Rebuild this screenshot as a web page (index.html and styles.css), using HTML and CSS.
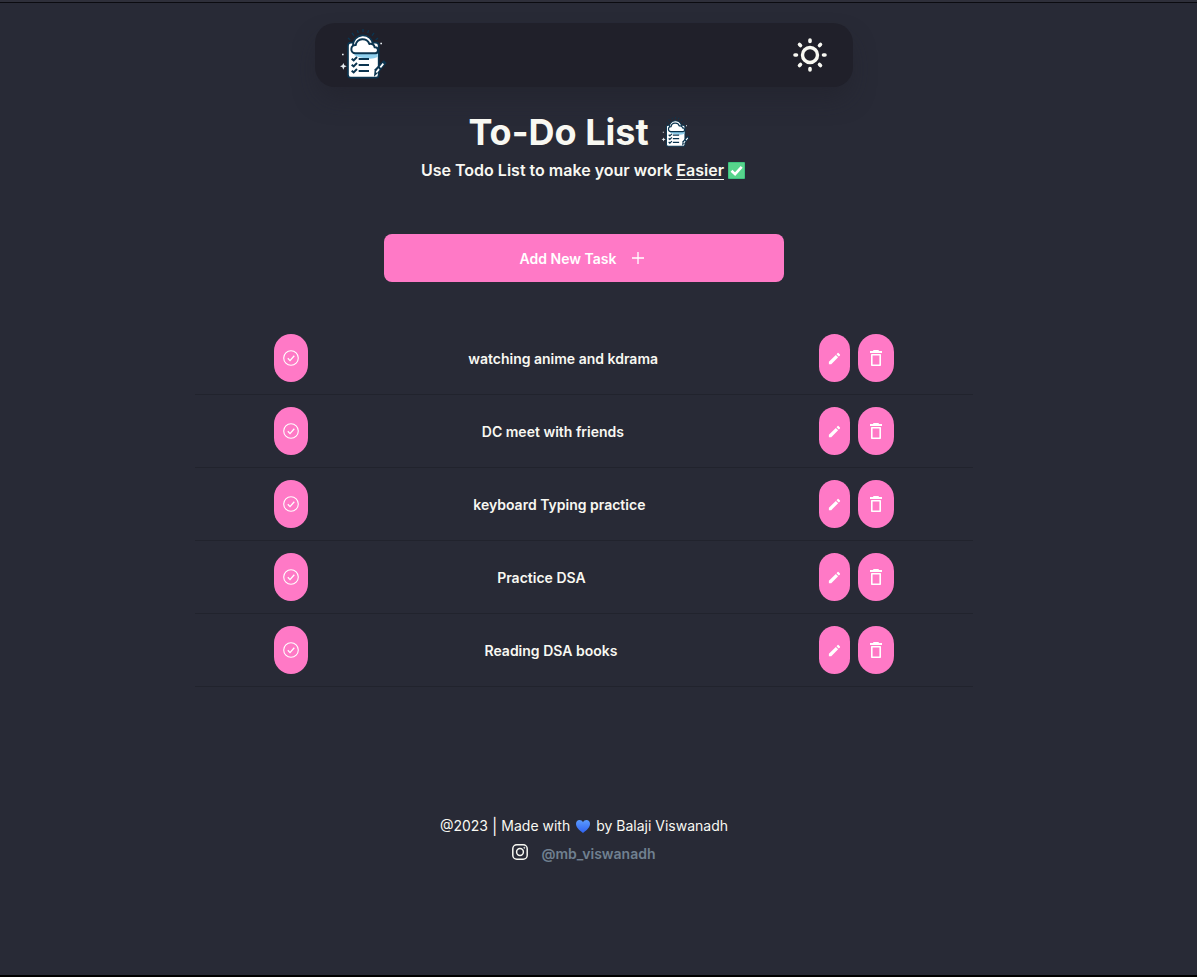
FILE: index.html
```html
<!DOCTYPE html>
<html lang="en">
<head>
<meta charset="utf-8">
<meta name="viewport" content="width=device-width, initial-scale=1">
<title>To-Do List</title>
<link rel="stylesheet" href="styles.css">
</head>
<body>
<svg class="sprite" aria-hidden="true">
  <symbol id="logo" viewBox="12 0 144 156">
    <path d="M39 30l7 6M51 15l6 8M67 7l3 8M84 3v9M101 7l-3 8M117 15l-6 8M129 30l-7 6" fill="none" stroke="#0b3550" stroke-width="4"/>
    <rect x="39" y="44" width="92" height="105" rx="9" fill="#fff" stroke="#0b3550" stroke-width="5"/>
    <path d="M58 76h70v11q-15 7-32 4-22 0-38-9z" fill="#8fd0ee"/>
    <path d="M54 54A30 30 0 0 1 114 50V62H54Z" fill="#fff" stroke="#0b3550" stroke-width="5"/>
    <path d="M61 76a12 12 0 0 1 1-25 21 20 0 0 1 41-3 12 12 0 0 1 16 10 9 9 0 0 1 2 18z" fill="#fff" stroke="#0b3550" stroke-width="6" stroke-linejoin="round"/>
    <path d="M71 93h31M71 111h31M71 129h31" stroke="#0b3550" stroke-width="6"/>
    <path d="M50 92l6 5 10-10M50 110l6 5 10-10M50 128l6 5 10-10" fill="none" stroke="#0b3550" stroke-width="6"/>
    <path d="M117 146l2-22 27-27 9 8-24 28z" fill="#0b3550"/>
    <path d="M122 132l8-11 4 4-8 10zM134 116l9-11 4 4-9 11z" fill="#fff"/>
    <path d="M25 105l3 7 7 3-7 3-3 7-3-7-7-3 7-3zM21 77h5v5h-5zM136 44h5v5h-5z" fill="#e8eef2"/>
  </symbol>
  <symbol id="check" viewBox="0 0 16 16">
    <circle cx="8" cy="8" r="7.3" fill="none" stroke="currentColor" stroke-width="1.1"/>
    <path d="M4.800 8.300l2.200 2.300 4.300-4.900" fill="none" stroke="currentColor" stroke-width="1.3"/>
  </symbol>
  <symbol id="pencil" viewBox="0 0 24 24">
    <path fill="currentColor" d="M3 17.200V21h3.800L17.800 9.900l-3.700-3.700zM20.700 7a1 1 0 0 0 0-1.400l-2.300-2.300a1 1 0 0 0-1.400 0l-1.800 1.800 3.700 3.700z"/>
  </symbol>
  <symbol id="trash" viewBox="0 0 12 16">
    <path d="M3.500 0h5l.5 1h3v2H0V1h3z" fill="currentColor"/>
    <path d="M1.800 4.800h8.400v10.400H1.800z" fill="none" stroke="currentColor" stroke-width="1.6" stroke-linejoin="round"/>
  </symbol>
</svg>
<div class="page">
  <header class="navbar">
    <a href="#" aria-label="Home"><svg class="navbar-logo"><use href="#logo"/></svg></a>
    <button class="theme" type="button" aria-label="Switch theme">
      <svg viewBox="0 0 34 34" fill="none" stroke="currentColor" stroke-linecap="round">
        <circle cx="17" cy="17" r="7.500" stroke-width="3.400"/>
        <path stroke-width="3.600" d="M17 2v1.500M17 30.500V32M2 17h1.500M30.500 17H32M6.500 6.500l1 1M26.500 26.500l1 1M27.500 6.500l-1 1M7.500 26.500l-1 1"/>
      </svg>
    </button>
  </header>
  <main class="main">
    <h1 class="title">To-Do List <svg class="title-logo" aria-hidden="true"><use href="#logo"/></svg></h1>
    <p class="subtitle">Use Todo List to make your work <span class="easier">Easier</span>
      <svg class="tick" viewBox="0 0 17 17" aria-hidden="true"><rect width="17" height="17" rx="1" fill="#3fc380"/><rect x="1" y="1" width="15" height="15" fill="#57d48c"/><path d="M3.500 8.700l3.600 3.500 6.600-7.400" fill="none" stroke="#fff" stroke-width="2.600"/></svg>
    </p>
    <button class="add" type="button"><span>Add New Task</span>
      <svg viewBox="0 0 12 12" aria-hidden="true"><path d="M6 0v12M0 6h12" stroke="currentColor" stroke-width="1.3"/></svg>
    </button>
    <ul class="tasks">
      <li class="task">
        <button class="pill done" type="button" aria-label="Complete"><svg><use href="#check"/></svg></button>
        <div class="task-name"><span>watching anime and kdrama</span></div>
        <button class="pill edit" type="button" aria-label="Edit"><svg><use href="#pencil"/></svg></button>
        <button class="pill delete" type="button" aria-label="Delete"><svg><use href="#trash"/></svg></button>
      </li>
      <li class="task">
        <button class="pill done" type="button" aria-label="Complete"><svg><use href="#check"/></svg></button>
        <div class="task-name"><span>DC meet with friends</span></div>
        <button class="pill edit" type="button" aria-label="Edit"><svg><use href="#pencil"/></svg></button>
        <button class="pill delete" type="button" aria-label="Delete"><svg><use href="#trash"/></svg></button>
      </li>
      <li class="task">
        <button class="pill done" type="button" aria-label="Complete"><svg><use href="#check"/></svg></button>
        <div class="task-name"><span>keyboard Typing practice</span></div>
        <button class="pill edit" type="button" aria-label="Edit"><svg><use href="#pencil"/></svg></button>
        <button class="pill delete" type="button" aria-label="Delete"><svg><use href="#trash"/></svg></button>
      </li>
      <li class="task">
        <button class="pill done" type="button" aria-label="Complete"><svg><use href="#check"/></svg></button>
        <div class="task-name"><span>Practice DSA</span></div>
        <button class="pill edit" type="button" aria-label="Edit"><svg><use href="#pencil"/></svg></button>
        <button class="pill delete" type="button" aria-label="Delete"><svg><use href="#trash"/></svg></button>
      </li>
      <li class="task">
        <button class="pill done" type="button" aria-label="Complete"><svg><use href="#check"/></svg></button>
        <div class="task-name"><span>Reading DSA books</span></div>
        <button class="pill edit" type="button" aria-label="Edit"><svg><use href="#pencil"/></svg></button>
        <button class="pill delete" type="button" aria-label="Delete"><svg><use href="#trash"/></svg></button>
      </li>
    </ul>
  </main>
  <footer class="footer">
    <p class="credit">@2023 <span class="bar">|</span> Made with
      <svg class="heart" viewBox="0 0 16 14" role="img" aria-label="love"><defs><linearGradient id="blue" x2="0" y2="1"><stop stop-color="#5b9bff"/><stop offset="1" stop-color="#2f62f0"/></linearGradient></defs><path fill="url(#blue)" d="M8 14C4 11 1 8.500 1 4.800 1 2.300 2.500 1 4.500 1 6 1 7.300 1.800 8 3.200 8.700 1.800 10 1 11.500 1c2 0 3.500 1.300 3.500 3.800C15 8.500 12 11 8 14z"/></svg>
      by Balaji Viswanadh</p>
    <p class="social">
      <svg class="instagram" viewBox="0 0 16 16" fill="none" stroke="currentColor" stroke-width="1.5" aria-hidden="true"><rect x=".8" y=".8" width="14.400" height="14.400" rx="4"/><circle cx="8" cy="8" r="3.400"/><circle cx="12.300" cy="3.800" r=".5" stroke-width="1"/></svg>
      <a href="#">@mb_viswanadh</a>
    </p>
  </footer>
</div>
</body>
</html>
```
FILE: styles.css
```css
* { box-sizing: border-box; margin: 0; padding: 0; }
body {
  background: #282a36;
  color: #f8f8f2;
  font: 14px/20px Inter, "Liberation Sans", sans-serif;
}
button { border: 0; color: inherit; font: inherit; cursor: pointer; }
svg { display: block; }
.sprite { position: absolute; width: 0; height: 0; }
.page {
  display: flex;
  flex-direction: column;
  align-items: center;
  min-height: 100vh;
  padding: 20px 29px 0 0;
  border-top: 3px solid #0b0b10;
  border-bottom: 2px solid #000;
}
.page::before {
  content: "";
  position: absolute;
  top: 0;
  left: 0;
  right: 0;
  height: 2px;
  background: #2e2f3a;
}
.navbar {
  display: flex;
  align-items: center;
  justify-content: space-between;
  width: 46%;
  height: 64px;
  padding: 0 26px 0 24px;
  border-radius: 20px;
  background: #20202a;
  box-shadow: 0 14px 24px -4px rgba(32, 32, 42, .5);
}
.navbar-logo { width: 48px; height: 52px; margin-bottom: 2px; }
.theme { background: none; }
.theme svg { width: 34px; height: 34px; }
.main {
  display: flex;
  flex-direction: column;
  align-items: center;
  width: 100%;
}
.title {
  display: flex;
  align-items: center;
  gap: 12px;
  margin-top: 25px;
  padding-right: 10px;
  font-size: 36px;
  line-height: 40px;
}
.title-logo { width: 29px; height: 32px; }
.subtitle {
  display: flex;
  align-items: center;
  gap: 4px;
  margin-top: 6px;
  padding-right: 2px;
  font-size: 16px;
  font-weight: 600;
  line-height: 24px;
}
.easier { border-bottom: 1px solid #f8f8f2; line-height: 18px; }
.tick { width: 17px; height: 17px; }
.add {
  display: flex;
  align-items: center;
  justify-content: center;
  gap: 16px;
  width: 400px;
  max-width: 100%;
  height: 48px;
  margin-top: 52px;
  padding-right: 4px;
  border-radius: 8px;
  background: #ff79c6;
  color: #fff;
  font-weight: 600;
}
.add span, .task-name span { padding-top: 2px; }
.add svg { width: 12px; height: 12px; }
.tasks { width: calc(200% / 3); margin-top: 40px; list-style: none; }
.task {
  display: flex;
  padding: 12px 79px;
  border-bottom: 1px solid #21232d;
}
.task-name {
  display: flex;
  flex: 1;
  align-items: center;
  font-weight: 600;
}
.task-name::before { content: ""; flex: 2 0 96px; }
.task-name::after { content: ""; flex: 5 0 0; }
.pill {
  display: flex;
  align-items: center;
  justify-content: center;
  height: 48px;
  border-radius: 18px;
  background: #ff79c6;
  color: #fff;
}
.done { width: 34px; }
.edit { width: 31px; }
.delete { width: 36px; margin-left: 8px; }
.done svg { width: 16px; height: 16px; }
.edit svg { width: 15px; height: 15px; }
.delete svg { width: 12px; height: 16px; }
.footer { margin-top: 127px; }
.credit, .social { display: flex; align-items: center; justify-content: center; }
.credit { gap: 5px; line-height: 24px; }
.bar { margin: 0 -1px; font-size: 16px; }
.heart { width: 16px; height: 14px; }
.social { gap: 13px; margin-top: 4px; line-height: 24px; }
.social a { color: #708090; font-weight: 600; text-decoration: none; }
.instagram { width: 16px; height: 16px; margin-bottom: 4px; }
```
